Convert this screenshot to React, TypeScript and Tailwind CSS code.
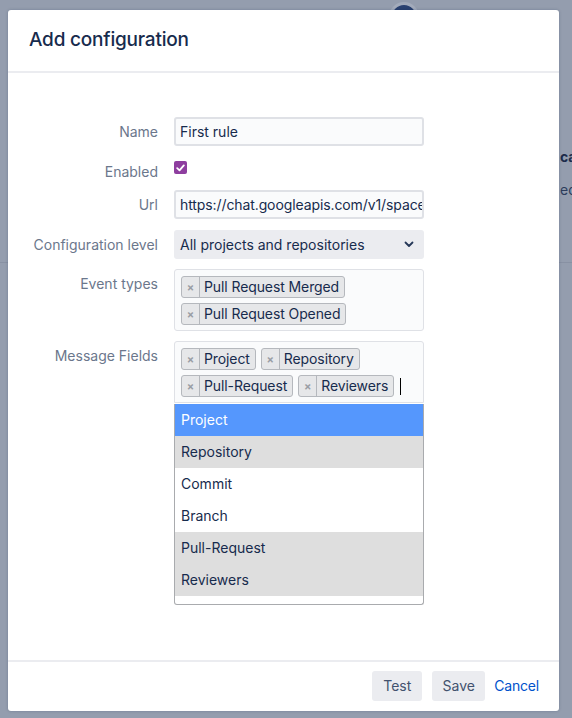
import React from "react";

function Tag({ label }: { label: string }) {
  return (
    <div className="flex h-[22px] items-stretch rounded-[3px] border border-[#b5b8bd] bg-[#e6e7e9] text-[14px] leading-[20px] text-[#172b4d]">
      <span className="flex w-[18px] items-center justify-center border-r border-[#b5b8bd] text-[11px] font-bold text-[#9a9ea5]">×</span>
      <span className="pl-[4px] pr-[5px] tracking-[-0.1px]">{label}</span>
    </div>
  );
}

function Label({ children }: { children: React.ReactNode }) {
  return (
    <div className="h-[29px] text-right text-[14px] leading-[29px] text-[#6b778c]">{children}</div>
  );
}

export default function App() {
  return (
    <div
      className="relative h-[718px] w-[572px] overflow-hidden bg-[#949dae]"
      style={{ fontFamily: "Inter, 'Noto Sans', sans-serif" }}
    >
      {/* page behind the overlay */}
      <div className="absolute left-[389px] top-[2px] h-[30px] w-[30px] rounded-full border-[3px] border-[#a3abbb] bg-[#2a4170]" />
      <div className="absolute left-[560px] top-[147px] text-[14px] font-bold leading-[20px] text-[#1d2c4b]">ca</div>
      <div className="absolute left-[560px] top-[180px] text-[14px] leading-[20px] text-[#2d3d5c]">ed</div>
      <div className="absolute left-0 top-[262px] h-px w-full bg-[#8891a3]" />

      {/* modal */}
      <div className="absolute left-[8px] top-[10px] flex h-[701px] w-[551px] flex-col rounded-[3px] bg-white shadow-[0_0_3px_rgba(9,30,66,0.25)]">
        <div className="flex h-[63px] items-center border-b-2 border-[#ebecf0] px-[21px]">
          <h1 className="text-[19px] font-medium tracking-[-0.2px] text-[#172b4d]">Add configuration</h1>
        </div>

        <div className="relative flex-1 px-[20px] pt-[44px]">
          <div className="grid grid-cols-[130px_250px] gap-x-[16px]">
            <Label>Name</Label>
            <div className="h-[29px] overflow-hidden whitespace-nowrap rounded-[3px] border-2 border-[#dfe1e6] bg-[#fafbfc] pl-[4px] text-[14px] leading-[25px] text-[#172b4d]">
              First rule
            </div>
          </div>

          <div className="mt-[11px] grid h-[29px] grid-cols-[130px_250px] gap-x-[16px]">
            <Label>Enabled</Label>
            <div className="pt-[4px]">
              <div className="flex h-[13px] w-[13px] items-center justify-center rounded-[2px] bg-[#8e3e9f]">
                <svg width="9" height="8" viewBox="0 0 9 8" fill="none">
                  <path d="M1.2 4.2 L3.5 6.3 L7.8 1.4" stroke="white" strokeWidth="1.8" strokeLinecap="round" strokeLinejoin="round" />
                </svg>
              </div>
            </div>
          </div>

          <div className="mt-[4px] grid grid-cols-[130px_250px] gap-x-[16px]">
            <Label>Url</Label>
            <div className="h-[29px] overflow-hidden whitespace-nowrap rounded-[3px] border-2 border-[#dfe1e6] bg-[#fafbfc] pl-[4px] pr-[4px] text-[14px] leading-[25px] tracking-[-0.1px] text-[#172b4d]">
              https://chat.googleapis.com/v1/spaces/AAAA/messages
            </div>
          </div>

          <div className="mt-[11px] grid grid-cols-[130px_250px] gap-x-[16px]">
            <Label>Configuration level</Label>
            <div className="flex h-[29px] items-center justify-between rounded-[3px] bg-[#ebecf0] pl-[6px] pr-[10px] text-[14px] text-[#172b4d]">
              <span>All projects and repositories</span>
              <svg width="10" height="7" viewBox="0 0 10 7" fill="none">
                <path d="M1.5 1.5 L5 5 L8.5 1.5" stroke="#253858" strokeWidth="1.8" strokeLinecap="round" strokeLinejoin="round" />
              </svg>
            </div>
          </div>

          <div className="mt-[10px] grid grid-cols-[130px_250px] gap-x-[16px]">
            <Label>Event types</Label>
            <div className="flex h-[62px] flex-col items-start gap-[5px] rounded-[3px] border border-[#dfe1e6] bg-[#fafbfc] px-[6px] pt-[6px]">
              <Tag label="Pull Request Merged" />
              <Tag label="Pull Request Opened" />
            </div>
          </div>

          <div className="mt-[10px] grid grid-cols-[130px_250px] gap-x-[16px]">
            <Label>Message Fields</Label>
            <div className="relative">
              <div className="flex h-[62px] flex-col items-start gap-[5px] rounded-t-[3px] border border-[#dfe1e6] bg-[#fafbfc] px-[6px] pt-[6px]">
                <div className="flex gap-[5px]">
                  <Tag label="Project" />
                  <Tag label="Repository" />
                </div>
                <div className="flex items-center gap-[5px]">
                  <Tag label="Pull-Request" />
                  <Tag label="Reviewers" />
                  <div className="ml-[1px] h-[17px] w-px bg-black" />
                </div>
              </div>
              <div className="absolute left-0 top-[63px] z-10 w-[250px] overflow-hidden rounded-b-[3px] border border-t-0 border-[#a9abae] bg-white pb-[8px] text-[14px] text-[#172b4d]">
                <div className="h-[32px] bg-[#5597fd] px-[6px] leading-[32px] text-white">Project</div>
                <div className="h-[32px] bg-[#dedede] px-[6px] leading-[32px]">Repository</div>
                <div className="h-[32px] px-[6px] leading-[32px]">Commit</div>
                <div className="h-[32px] px-[6px] leading-[32px]">Branch</div>
                <div className="h-[32px] bg-[#dedede] px-[6px] leading-[32px]">Pull-Request</div>
                <div className="h-[32px] bg-[#dedede] px-[6px] leading-[32px]">Reviewers</div>
              </div>
            </div>
          </div>
        </div>

        <div className="flex h-[51px] items-center justify-end border-t-2 border-[#ebecf0] pr-[20px] pb-[2px]">
          <button className="h-[30px] w-[50px] rounded-[3px] bg-[#ebecf0] text-[14px] text-[#42526e]">Test</button>
          <button className="ml-[10px] h-[30px] w-[53px] rounded-[3px] bg-[#ebecf0] text-[14px] text-[#42526e]">Save</button>
          <button className="ml-[9px] h-[30px] text-[14px] tracking-[-0.2px] text-[#0052cc]">Cancel</button>
        </div>
      </div>
    </div>
  );
}
